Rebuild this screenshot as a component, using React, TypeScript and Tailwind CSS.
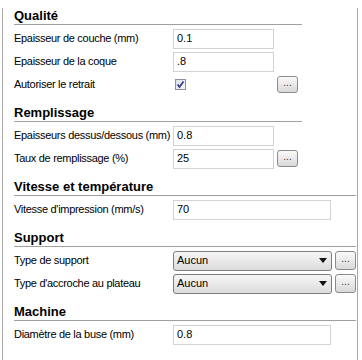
import { ReactNode } from 'react';

const font = { fontFamily: '"Liberation Sans", Arial, sans-serif' };

// Section title with the grey rule under it
const SectionHeader = ({ title, wide }: { title: string; wide?: boolean }) => (
  <div
    className={`mt-[9px] first:mt-[8px] h-[17px] border-b border-[#a0a0a0] pb-[1px] text-[13px] leading-[16px] font-bold text-black ${
      wide ? 'w-[342px]' : 'w-[288px]'
    }`}
  >
    {title}
  </div>
);

const Row = ({ label, children }: { label: string; children: ReactNode }) => (
  <div className="flex h-[23px] items-center">
    <div className="w-[159px] shrink-0 whitespace-nowrap text-[11px] tracking-[-0.3px] text-black">{label}</div>
    <div className="flex items-center">{children}</div>
  </div>
);

const TextBox = ({ value, wide }: { value: string; wide?: boolean }) => (
  <div
    className={`flex h-[20px] items-center border border-[#d3d3d3] bg-white pl-[3px] text-[11px] text-black ${
      wide ? 'w-[158px]' : 'w-[101px]'
    }`}
  >
    {value}
  </div>
);

const DotsButton = ({ className = '' }: { className?: string }) => (
  <div
    className={`flex h-[17px] w-[21px] items-center justify-center rounded-[3px] border border-[#8c8c8c] bg-gradient-to-b from-[#fafafa] to-[#d9d9d9] pb-[3px] text-[10px] leading-none text-[#333] ${className}`}
  >
    ...
  </div>
);

const Select = ({ value }: { value: string }) => (
  <div className="flex h-[20px] w-[159px] items-center justify-between rounded-[3px] border border-[#7d7d7d] bg-gradient-to-b from-[#f6f6f6] to-[#dcdcdc] pl-[3px] pr-[4px] text-[11px] text-black">
    <span>{value}</span>
    <svg width="8" height="5" viewBox="0 0 8 5">
      <path d="M0 0 H8 L4 5 Z" fill="#111" />
    </svg>
  </div>
);

const CheckBox = () => (
  <div className="ml-[2px] h-[11px] w-[11px] border border-[#8b8fa8] bg-gradient-to-br from-[#dfe1ea] to-[#f8f8fb]">
    <svg width="9" height="9" viewBox="0 0 9 9">
      <path d="M1.5 4.5 L3.5 7 L7.5 1.5" stroke="#3a3f9a" strokeWidth="1.8" fill="none" />
    </svg>
  </div>
);

export default function App() {
  return (
    <div className="h-[360px] w-[362px] bg-white" style={font}>
      <div className="ml-[2px] h-[360px] w-[356px] border-x border-[#a8a8a8] pl-[11px]">
        <SectionHeader title="Qualité" />
        <div className="pt-[2px]">
          <Row label="Epaisseur de couche (mm)">
            <TextBox value="0.1" />
          </Row>
          <Row label="Epaisseur de la coque">
            <TextBox value=".8" />
          </Row>
          <Row label="Autoriser le retrait">
            <CheckBox />
            <DotsButton className="ml-[91px]" />
          </Row>
        </div>

        <SectionHeader title="Remplissage" />
        <div className="pt-[2px]">
          <Row label="Epaisseurs dessus/dessous (mm)">
            <TextBox value="0.8" />
          </Row>
          <Row label="Taux de remplissage (%)">
            <TextBox value="25" />
            <DotsButton className="ml-[3px]" />
          </Row>
        </div>

        <SectionHeader title="Vitesse et température" wide />
        <div className="pt-[2px]">
          <Row label="Vitesse d'impression (mm/s)">
            <TextBox value="70" wide />
          </Row>
        </div>

        <SectionHeader title="Support" wide />
        <div className="pt-[2px]">
          <Row label="Type de support">
            <Select value="Aucun" />
            <DotsButton className="ml-[3px] h-[19px]" />
          </Row>
          <Row label="Type d'accroche au plateau">
            <Select value="Aucun" />
            <DotsButton className="ml-[3px] h-[19px]" />
          </Row>
        </div>

        <SectionHeader title="Machine" wide />
        <div className="pt-[2px]">
          <Row label="Diamètre de la buse (mm)">
            <TextBox value="0.8" wide />
          </Row>
        </div>
      </div>
    </div>
  );
}
